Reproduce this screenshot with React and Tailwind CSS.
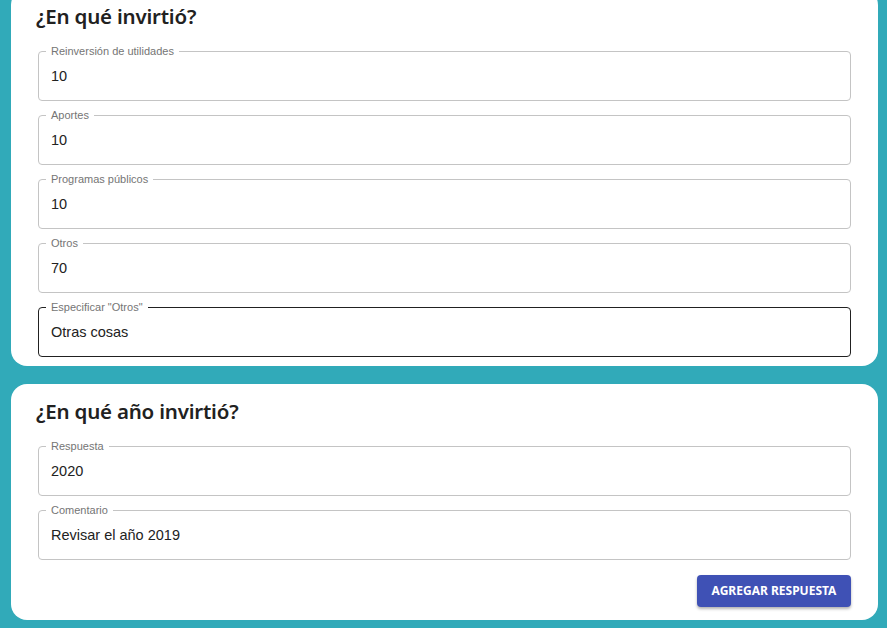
const fields1 = [
  { label: "Reinversión de utilidades", value: "10" },
  { label: "Aportes", value: "10" },
  { label: "Programas públicos", value: "10" },
  { label: "Otros", value: "70" },
  { label: 'Especificar "Otros"', value: "Otras cosas", active: true },
];

const fields2 = [
  { label: "Respuesta", value: "2020" },
  { label: "Comentario", value: "Revisar el año 2019" },
];

function OutlinedField({ label, value, active }) {
  return (
    <div
      className={`relative h-[50px] rounded-[4px] border flex items-center px-[12px] pt-[2px] ${
        active ? "border-[#212121]" : "border-[#c4c4c4]"
      }`}
    >
      <span className="absolute -top-[7px] left-[7px] bg-white px-[5px] text-[11px] leading-[13px] text-[#757575]">
        {label}
      </span>
      <span className="text-[14.5px] text-[#222]">{value}</span>
    </div>
  );
}

function Card({ title, fields, className, children }) {
  return (
    <div className={`bg-white rounded-[16px] px-[27px] pt-[12px] ${className}`}>
      <h2 className="-ml-[2px] mb-[20px] text-[20.5px] leading-[30px] font-semibold tracking-[-0.2px] text-[#212121] [font-family:'Noto_Sans',sans-serif]">
        {title}
      </h2>
      <div className="flex flex-col gap-[14px]">
        {fields.map((f) => (
          <OutlinedField key={f.label} {...f} />
        ))}
      </div>
      {children}
    </div>
  );
}

export default function App() {
  return (
    <div className="h-[628px] overflow-hidden bg-[#31aab9] pl-[11px] pr-[9px] [font-family:'Liberation_Sans',Arial,sans-serif]">
      <Card title="¿En qué invirtió?" fields={fields1} className="-mt-[11px] pb-[9px]" />
      <Card title="¿En qué año invirtió?" fields={fields2} className="mt-[18px] pb-[13px]">
        <div className="flex justify-end mt-[15px]">
          <button className="h-[32px] w-[154px] rounded-[4px] bg-[#3f51b5] text-white text-[12px] font-bold uppercase shadow-[0_2px_3px_rgba(0,0,0,0.3)] [font-family:'Noto_Sans',sans-serif]">
            Agregar respuesta
          </button>
        </div>
      </Card>
    </div>
  );
}
